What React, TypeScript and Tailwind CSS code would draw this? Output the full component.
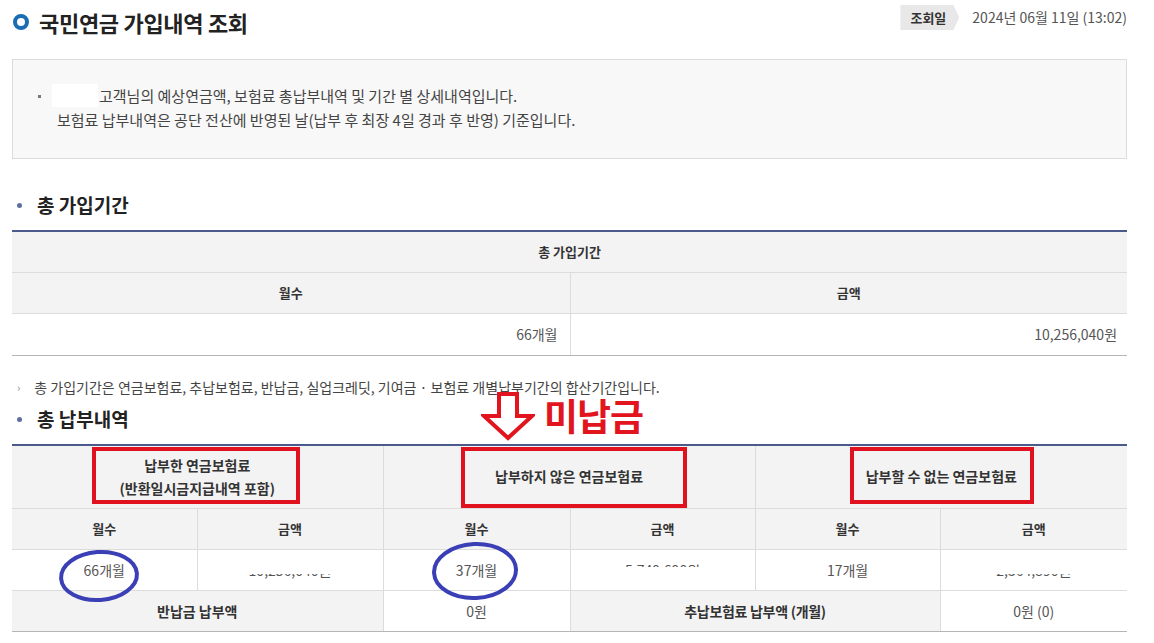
import React from "react";

function Masked({ text, mode }: { text: string; mode: "top" | "bottom" }) {
  return (
    <span className="relative inline-block">
      <span>{text}</span>
      {mode === "top" ? (
        <span className="absolute left-[-2px] right-[-2px] top-0 h-[68%] bg-white" />
      ) : (
        <span className="absolute left-[-2px] right-[-2px] bottom-0 h-[62%] bg-white" />
      )}
    </span>
  );
}

export default function App() {
  const th = "border border-[#dcdcdc] bg-[#f3f3f3] font-bold text-[13px] text-[#333] text-center align-middle";
  const thL = "border border-[#dcdcdc] bg-[#f3f3f3] font-bold text-[14px] text-[#333] text-center align-middle";
  const td = "border border-[#dcdcdc] bg-white text-[14px] text-[#555] align-middle";
  return (
    <div className="relative w-[1154px] h-[643px] overflow-hidden bg-white [font-family:'Noto_Sans_CJK_KR','Noto_Sans',sans-serif] text-[#333]">
      <div className="ml-[12px] w-[1115px]">
        {/* header */}
        <div className="flex h-[59px] justify-between items-start">
          <div className="flex items-center pt-[8px] gap-[10px]">
            <span className="ml-[1px] block w-[16px] h-[16px] rounded-full border-[4px] border-[#1a6cb3]" />
            <h1 className="text-[22px] leading-[28px] font-bold text-[#222] tracking-[-0.3px]">국민연금 가입내역 조회</h1>
          </div>
          <div className="flex items-center mt-[5px] gap-[13px]">
            <span className="h-[25px] pl-[10px] pr-[13px] flex items-center bg-[#e8e8e8] text-[13px] font-bold text-[#333] [clip-path:polygon(0_0,calc(100%_-_6px)_0,100%_50%,calc(100%_-_6px)_100%,0_100%)]">
              조회일
            </span>
            <span className="text-[14px] text-[#555]">2024년 06월 11일 (13:02)</span>
          </div>
        </div>

        {/* info box */}
        <div className="h-[100px] border border-[#dcdcdc] bg-[#f8f8f8] pt-[24px]">
          <div className="relative pl-[44px] text-[15px] leading-[24px] text-[#444]">
            <span className="absolute left-[25px] top-[11px] w-[3px] h-[3px] bg-[#777]" />
            <p className="h-[24px]">
              <span className="inline-block align-top w-[46px] h-[23px] bg-white -ml-[5px] mr-[1px]" />
              고객님의 예상연금액, 보험료 총납부내역 및 기간 별 상세내역입니다.
            </p>
            <p>보험료 납부내역은 공단 전산에 반영된 날(납부 후 최장 4일 경과 후 반영) 기준입니다.</p>
          </div>
        </div>

        {/* heading 1 */}
        <h2 className="mt-[32px] flex items-center h-[28px] text-[19px] font-bold text-[#222]">
          <span className="ml-[5px] mr-[15px] w-[5px] h-[5px] rounded-full bg-[#5d6f9e]" />
          총 가입기간
        </h2>

        {/* table 1 */}
        <table className="mt-[11px] w-full table-fixed border-collapse border-t-2 border-t-[#4b5a8a]">
          <colgroup>
            <col className="w-[558px]" />
            <col className="w-[557px]" />
          </colgroup>
          <tbody>
            <tr className="h-[41px]">
              <th colSpan={2} className={th + " border-t-0 border-x-0"}>총 가입기간</th>
            </tr>
            <tr className="h-[41px]">
              <th className={th + " border-l-0"}>월수</th>
              <th className={th + " border-r-0"}>금액</th>
            </tr>
            <tr className="h-[42px]">
              <td className={td + " text-right pr-[12px] border-l-0 border-b-[#b5b5b5]"}>66개월</td>
              <td className={td + " text-right pr-[10px] border-r-0 border-b-[#b5b5b5]"}>10,256,040원</td>
            </tr>
          </tbody>
        </table>

        {/* note */}
        <p className="mt-[22px] flex items-center h-[20px] text-[14px] text-[#444]">
          <span className="ml-[5px] mr-[14px] text-[11px] text-[#888]">›</span>
          총 가입기간은 연금보험료, 추납보험료, 반납금, 실업크레딧, 기여금 · 보험료 개별납부기간의 합산기간입니다.
        </p>

        {/* heading 2 */}
        <h2 className="mt-[8px] flex items-center h-[28px] text-[19px] font-bold text-[#222]">
          <span className="ml-[5px] mr-[15px] w-[5px] h-[5px] rounded-full bg-[#5d6f9e]" />
          총 납부내역
        </h2>

        {/* table 2 */}
        <table className="mt-[10px] w-full table-fixed border-collapse border-t-2 border-t-[#4b5a8a]">
          <colgroup>
            <col className="w-[185px]" />
            <col className="w-[186px]" />
            <col className="w-[187px]" />
            <col className="w-[185px]" />
            <col className="w-[185px]" />
            <col className="w-[187px]" />
          </colgroup>
          <tbody>
            <tr className="h-[64px]">
              <th colSpan={2} className={thL + " border-t-0 border-l-0 leading-[23px]"}>
                납부한 연금보험료
                <br />
                (반환일시금지급내역 포함)
              </th>
              <th colSpan={2} className={thL + " border-t-0"}>납부하지 않은 연금보험료</th>
              <th colSpan={2} className={thL + " border-t-0 border-r-0"}>납부할 수 없는 연금보험료</th>
            </tr>
            <tr className="h-[41px]">
              <th className={th + " border-l-0"}>월수</th>
              <th className={th}>금액</th>
              <th className={th}>월수</th>
              <th className={th}>금액</th>
              <th className={th}>월수</th>
              <th className={th + " border-r-0"}>금액</th>
            </tr>
            <tr className="h-[41px]">
              <td className={td + " text-center border-l-0"}>66개월</td>
              <td className={td + " text-center"}>
                <Masked text="10,256,040원" mode="top" />
              </td>
              <td className={td + " text-center"}>37개월</td>
              <td className={td + " text-center"}>
                <Masked text="5,749,690원" mode="bottom" />
              </td>
              <td className={td + " text-center"}>17개월</td>
              <td className={td + " text-center border-r-0"}>
                <Masked text="2,364,890원" mode="top" />
              </td>
            </tr>
            <tr className="h-[41px]">
              <th colSpan={2} className={thL + " border-l-0 border-b-[#b5b5b5]"}>반납금 납부액</th>
              <td className={td + " text-center border-b-[#b5b5b5]"}>0원</td>
              <th colSpan={2} className={thL + " border-b-[#b5b5b5] tracking-[-0.3px]"}>추납보험료 납부액 (개월)</th>
              <td className={td + " text-center border-r-0 border-b-[#b5b5b5]"}>0원 (0)</td>
            </tr>
          </tbody>
        </table>
      </div>

      {/* annotations */}
      <svg className="absolute left-[481px] top-[391px]" width="54" height="50" viewBox="0 0 54 50">
        <path
          d="M18 3 H36 V25 H51 L27 47 L3 25 H18 Z"
          fill="white"
          stroke="#e2141e"
          strokeWidth="4"
          strokeLinejoin="miter"
        />
      </svg>
      <div className="absolute left-[544px] top-[398px] text-[37px] leading-[34px] font-bold text-[#e2141e] tracking-[-1px]">
        미납금
      </div>

      <div className="absolute left-[92px] top-[447px] w-[208px] h-[57px] border-[4px] border-[#e0121f]" />
      <div className="absolute left-[461px] top-[447px] w-[226px] h-[61px] border-[4px] border-[#e0121f]" />
      <div className="absolute left-[850px] top-[447px] w-[184px] h-[57px] border-[4px] border-[#e0121f]" />

      <svg className="absolute left-[56px] top-[547px]" width="88" height="58" viewBox="0 0 88 58">
        <ellipse cx="43" cy="29" rx="38" ry="24" fill="none" stroke="#3a3fb6" strokeWidth="4" transform="rotate(-4 43 29)" />
      </svg>
      <svg className="absolute left-[429px] top-[539px]" width="92" height="64" viewBox="0 0 92 64">
        <ellipse cx="46" cy="32" rx="41" ry="27" fill="none" stroke="#3a3fb6" strokeWidth="4" transform="rotate(-3 46 32)" />
      </svg>
    </div>
  );
}
